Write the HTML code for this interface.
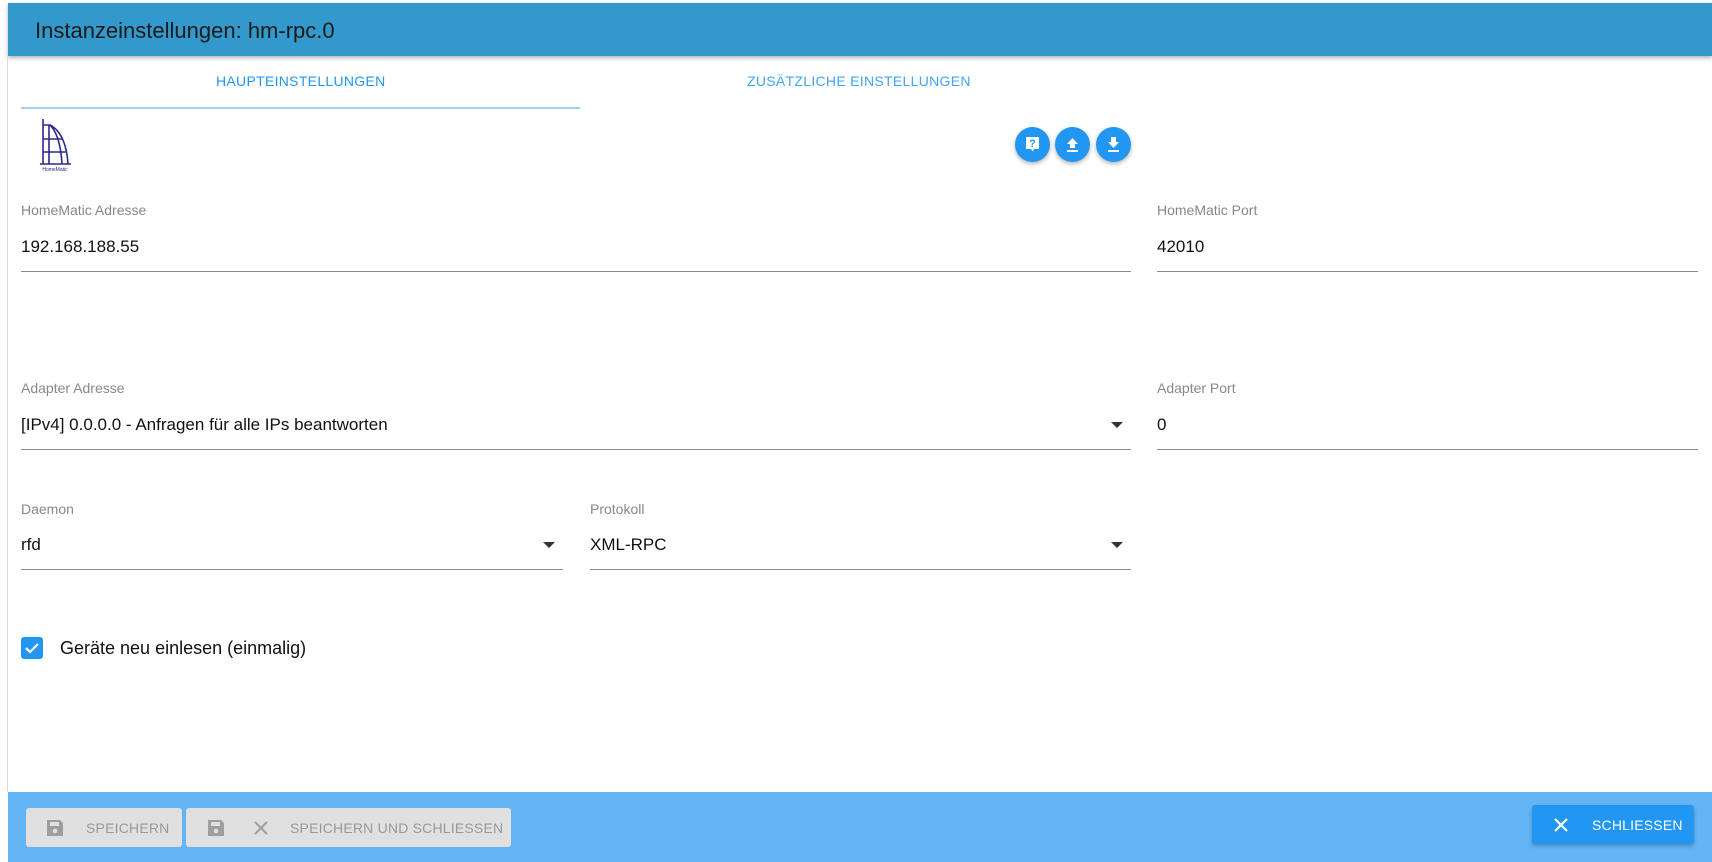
<!DOCTYPE html>
<html><head><meta charset="utf-8"><style>
*{box-sizing:border-box;margin:0;padding:0}
body{width:1712px;height:862px;background:#fff;font-family:"Liberation Sans",sans-serif;position:relative;overflow:hidden}
.abs{position:absolute}
.hdr{left:8px;top:3px;width:1704px;height:53px;background:#3399cc;box-shadow:0 2px 4px rgba(0,0,0,.3)}
.hdr span{position:absolute;left:27px;top:15px;font-size:22px;color:#1a1a1a}
.side{left:7px;top:56px;width:1px;height:736px;background:#ddd}
.tab{font-size:14px;color:#2196f3;letter-spacing:.3px;top:73px}
.lbl{font-size:14px;color:#888}
.val{font-size:17px;color:#111}
.line{height:1px;background:#8a8a8a}
.arr{width:0;height:0;border-left:6px solid transparent;border-right:6px solid transparent;border-top:6px solid #333}
.fab{width:35px;height:35px;border-radius:50%;background:#2196f3;box-shadow:0 2px 4px rgba(0,0,0,.3);top:127px}
.fab svg{position:absolute;left:8px;top:8px}
.foot{left:8px;top:792px;width:1704px;height:70px;background:#64b5f6}
.btn{background:#e0e0e0;border-radius:3px;height:39px;top:808px;color:#999;font-size:14px;letter-spacing:.2px}
</style></head><body>
<div class="abs hdr"><span>Instanzeinstellungen: hm-rpc.0</span></div>
<div class="abs side"></div>
<div class="abs tab" style="left:216px">HAUPTEINSTELLUNGEN</div>
<div class="abs tab" style="left:747px;color:#42a5f5">ZUSÄTZLICHE EINSTELLUNGEN</div>
<div class="abs" style="left:21px;top:107px;width:559px;height:2px;background:#9fd0f5"></div>
<svg class="abs" style="left:36px;top:117px" width="40" height="56" viewBox="0 0 40 56">
<g stroke="#2a2a8a" fill="none" stroke-width="1.6"><path d="M7 2V47M13 8V47M7 8H14C26 14 31 30 32 47M7 22H27M7 35H31M4 47H35"/><path d="M14 8C22 16 25 30 26 47"/></g>
<text x="19" y="54" font-size="5" fill="#2a2a8a" text-anchor="middle" font-family="Liberation Sans">HomeMatic</text></svg>
<div class="abs fab" style="left:1015px"><svg width="19" height="19" viewBox="0 0 19 19"><path d="M3 2h13v12h-5l-1.5 2.5L8 14H3z" fill="#fff"/><text x="9.5" y="12" font-size="11" font-weight="bold" fill="#2196f3" text-anchor="middle" font-family="Liberation Sans">?</text></svg></div>
<div class="abs fab" style="left:1055px"><svg width="19" height="19" viewBox="0 0 19 19"><path d="M9.5 3L15 9h-3v4H7V9H4z M4 15h11v2H4z" fill="#fff"/></svg></div>
<div class="abs fab" style="left:1096px"><svg width="19" height="19" viewBox="0 0 19 19"><path d="M7 2h5v5h3l-5.5 6L4 7h3z M4 15h11v2H4z" fill="#fff"/></svg></div>

<div class="abs lbl" style="left:21px;top:202px">HomeMatic Adresse</div>
<div class="abs val" style="left:21px;top:237px">192.168.188.55</div>
<div class="abs line" style="left:21px;top:271px;width:1110px"></div>
<div class="abs lbl" style="left:1157px;top:202px">HomeMatic Port</div>
<div class="abs val" style="left:1157px;top:237px">42010</div>
<div class="abs line" style="left:1157px;top:271px;width:541px"></div>

<div class="abs lbl" style="left:21px;top:380px">Adapter Adresse</div>
<div class="abs val" style="left:21px;top:415px">[IPv4] 0.0.0.0 - Anfragen für alle IPs beantworten</div>
<div class="abs arr" style="left:1111px;top:422px"></div>
<div class="abs line" style="left:21px;top:449px;width:1110px"></div>
<div class="abs lbl" style="left:1157px;top:380px">Adapter Port</div>
<div class="abs val" style="left:1157px;top:415px">0</div>
<div class="abs line" style="left:1157px;top:449px;width:541px"></div>

<div class="abs lbl" style="left:21px;top:501px">Daemon</div>
<div class="abs val" style="left:21px;top:535px">rfd</div>
<div class="abs arr" style="left:543px;top:542px"></div>
<div class="abs line" style="left:21px;top:569px;width:542px"></div>
<div class="abs lbl" style="left:590px;top:501px">Protokoll</div>
<div class="abs val" style="left:590px;top:535px">XML-RPC</div>
<div class="abs arr" style="left:1111px;top:542px"></div>
<div class="abs line" style="left:590px;top:569px;width:541px"></div>

<div class="abs" style="left:21px;top:637px;width:22px;height:22px;background:#2196f3;border-radius:3px"><svg width="22" height="22" viewBox="0 0 22 22"><path d="M5 11l4 4 8-8" stroke="#fff" stroke-width="2.2" fill="none"/></svg></div>
<div class="abs val" style="left:60px;top:638px;font-size:18px">Geräte neu einlesen (einmalig)</div>

<div class="abs foot"></div>
<div class="abs btn" style="left:26px;width:156px"><svg class="abs" style="left:19px;top:10px" width="20" height="20" viewBox="0 0 20 20"><path d="M2 2h13l3 3v13H2z" fill="#9e9e9e"/><rect x="5" y="4" width="9" height="4" fill="#e0e0e0"/><circle cx="10" cy="13" r="2.3" fill="#e0e0e0"/></svg><span class="abs" style="left:60px;top:12px">SPEICHERN</span></div>
<div class="abs btn" style="left:186px;width:325px"><svg class="abs" style="left:20px;top:10px" width="20" height="20" viewBox="0 0 20 20"><path d="M2 2h13l3 3v13H2z" fill="#9e9e9e"/><rect x="5" y="4" width="9" height="4" fill="#e0e0e0"/><circle cx="10" cy="13" r="2.3" fill="#e0e0e0"/></svg><svg class="abs" style="left:67px;top:12px" width="16" height="16" viewBox="0 0 16 16"><path d="M2 2l12 12M14 2L2 14" stroke="#9e9e9e" stroke-width="2"/></svg><span class="abs" style="left:104px;top:12px">SPEICHERN UND SCHLIESSEN</span></div>
<div class="abs" style="left:1532px;top:805px;width:162px;height:39px;background:#2196f3;border-radius:3px;box-shadow:0 2px 4px rgba(0,0,0,.25);color:#fff;font-size:14px;letter-spacing:.2px"><svg class="abs" style="left:21px;top:12px" width="16" height="16" viewBox="0 0 16 16"><path d="M2 2l12 12M14 2L2 14" stroke="#fff" stroke-width="2.2"/></svg><span class="abs" style="left:60px;top:12px">SCHLIESSEN</span></div>
</body></html>
